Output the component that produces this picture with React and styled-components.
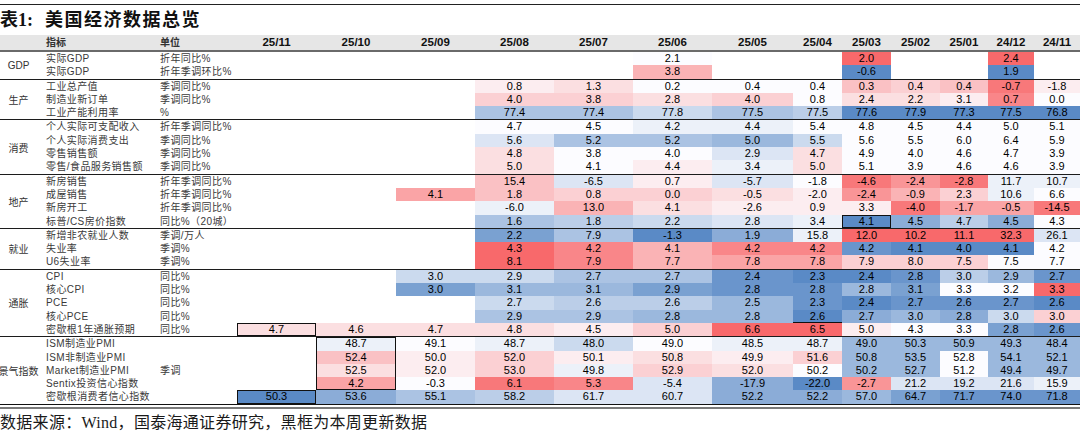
import React from 'react';
import styled, { createGlobalStyle } from 'styled-components';

const GlobalStyle = createGlobalStyle`
  html, body { margin: 0; padding: 0; background: #fff; }
  body { font-family: "Liberation Sans", "Noto Sans CJK SC", sans-serif; color: #000; }
`;

const COLS = '44px 114px 79px 79px 80px 79px 79px 79px 79px 81px 49px 49px 49px 48px 46px 46px';
const ROW_H = 13.3;

const RED = [248, 105, 107];
const BLUE = [90, 138, 198];
const WHITE = [252, 252, 255];

// tone like "r7" / "b10" / "w" -> excel style 3 colour scale
const toneColor = (tone) => {
  if (!tone) return 'transparent';
  if (tone === 'w') return 'rgb(252,252,255)';
  const target = tone[0] === 'r' ? RED : BLUE;
  const k = parseInt(tone.slice(1), 10) / 10;
  const c = WHITE.map((w, i) => Math.round(w + (target[i] - w) * k));
  return `rgb(${c.join(',')})`;
};

const boxShadow = (sides) => {
  if (!sides) return 'none';
  const map = { l: 'inset 1px 0 0 #111', r: 'inset -1px 0 0 #111', t: 'inset 0 1px 0 #111', b: 'inset 0 -1px 0 #111' };
  return sides.split('').map((s) => map[s]).join(', ');
};

const Page = styled.div`
  width: 1080px;
  height: 435px;
  overflow: hidden;
  padding-top: 4px;
  box-sizing: border-box;
`;

const TopRule = styled.div`
  border-top: 1.5px solid #222;
`;

const Title = styled.h1`
  margin: 0;
  height: 30px;
  line-height: 30px;
  font-family: "Liberation Serif", "Noto Sans CJK SC", serif;
  font-size: 18px;
  font-weight: bold;
  color: #111;
  white-space: nowrap;
`;

const TitleName = styled.span`
  margin-left: 12px;
  letter-spacing: 1.5px;
`;

const HeaderRow = styled.div`
  display: grid;
  grid-template-columns: ${COLS};
  height: 15px;
  background: #e6e6e6;
  border-bottom: 2px solid #6a6a6a;
`;

const HeadLabel = styled.div`
  padding-left: 2px;
  font-size: 10px;
  font-weight: bold;
  line-height: 15px;
  color: #333;
`;

const HeadDate = styled.div`
  text-align: center;
  font-size: 11.5px;
  font-weight: bold;
  line-height: 15px;
  color: #111;
`;

const Group = styled.div`
  display: grid;
  grid-template-columns: ${COLS};
  grid-auto-rows: ${ROW_H}px;
  border-top: ${(p) => (p.$first ? 'none' : '1px solid #1c1c1c')};
`;

const GroupLabel = styled.div`
  grid-column: 1;
  grid-row: 1 / span ${(p) => p.$rows};
  display: flex;
  align-items: center;
  justify-content: center;
  padding-right: 7px;
  font-size: 10px;
  color: #333;
  white-space: nowrap;
  overflow: visible;
`;

const Indicator = styled.div`
  padding-left: 2px;
  font-size: 10px;
  line-height: ${ROW_H}px;
  color: #3a3a3a;
  letter-spacing: 0.4px;
  white-space: nowrap;
`;

const Unit = styled(Indicator)`
  ${(p) => p.$span && `
    grid-column: 3;
    grid-row: 1 / span ${p.$span};
    display: flex;
    align-items: center;
  `}
`;

const Cell = styled.div`
  text-align: center;
  font-size: 11px;
  line-height: ${ROW_H}px;
  color: #000;
  background: ${(p) => toneColor(p.$tone)};
  box-shadow: ${(p) => boxShadow(p.$box)};
  white-space: nowrap;
`;

const BottomRule = styled.div`
  height: 2px;
  border-top: 1.5px solid #111;
  border-bottom: 2px solid #7a7a7a;
`;

const Source = styled.div`
  margin-top: 4px;
  font-family: "Liberation Serif", "Noto Sans CJK SC", serif;
  font-size: 16px;
  line-height: 20px;
  letter-spacing: 0.3px;
  color: #1a1a1a;
  white-space: nowrap;
`;

const DATES = ['25/11', '25/10', '25/09', '25/08', '25/07', '25/06', '25/05', '25/04', '25/03', '25/02', '25/01', '24/12', '24/11'];

const GROUPS = [
  {
    name: 'GDP',
    rows: [
      ['实际GDP', '折年同比%', ['', '', '', '', '', '2.1 w', '', '', '2.0 r10', '', '', '2.4 r10', '']],
      ['实际GDP', '折年季调环比%', ['', '', '', '', '', '3.8 r5', '', '', '-0.6 b10', '', '', '1.9 b10', '']],
    ],
  },
  {
    name: '生产',
    rows: [
      ['工业总产值', '季调同比%', ['', '', '', '0.8 r1', '1.3 r2', '0.2 w', '0.4 w', '0.4 w', '0.3 r4', '0.4 r3', '0.4 r4', '-0.7 r9', '-1.8 r1']],
      ['制造业新订单', '季调同比%', ['', '', '', '4.0 r3', '3.8 r3', '2.8 r2', '4.0 r3', '0.8 w', '2.4 r2', '2.2 r2', '3.1 r1', '0.7 r8', '0.0 w']],
      ['工业产能利用率', '%', ['', '', '', '77.4 b5', '77.4 b5', '77.8 b3', '77.5 b5', '77.5 b4', '77.6 b10', '77.9 b10', '77.3 b10', '77.5 b10', '76.8 b10']],
    ],
  },
  {
    name: '消费',
    rows: [
      ['个人实际可支配收入', '折年季调同比%', ['', '', '', '4.7 w', '4.5 w', '4.2 b1', '4.4 b1', '5.4 w', '4.8 w', '4.5 w', '4.4 w', '5.0 w', '5.1 w']],
      ['个人实际消费支出', '季调同比%', ['', '', '', '5.6 b2', '5.2 b5', '5.2 b5', '5.0 b6', '5.5 b3', '5.6 w', '5.5 w', '6.0 w', '6.4 w', '5.9 w']],
      ['零售销售额', '季调同比%', ['', '', '', '4.8 r2', '3.8 w', '4.0 w', '2.9 b2', '4.7 r2', '4.9 w', '4.0 w', '4.6 w', '4.7 w', '3.9 w']],
      ['零售/食品服务销售额', '季调同比%', ['', '', '', '5.0 r2', '4.1 w', '4.4 r1', '3.4 b1', '5.0 r2', '5.1 w', '3.9 w', '4.6 w', '4.6 w', '3.9 w']],
    ],
  },
  {
    name: '地产',
    rows: [
      ['新房销售', '折年季调同比%', ['', '', '', '15.4 r4', '-6.5 b2', '0.7 r1', '-5.7 b2', '-1.8 w', '-4.6 r9', '-2.4 r7', '-2.8 r9', '11.7 b1', '10.7 b1']],
      ['成屋销售', '折年季调同比%', ['', '', '4.1 r6', '1.8 r4', '0.8 r3', '0.0 r3', '-0.5 r2', '-2.0 r1', '-2.4 r7', '-0.9 r5', '2.3 r3', '10.6 b1', '6.6 w']],
      ['新房开工', '折年季调同比%', ['', '', '', '-6.0 b1', '13.0 r5', '4.1 r2', '-2.6 r1', '0.9 r1', '3.3 r1', '-4.0 r9', '-1.7 r6', '-0.5 r6', '-14.5 r9']],
      ['标普/CS房价指数', '同比%（20城）', ['', '', '', '1.6 b5', '1.8 b4', '2.2 b3', '2.8 b2', '3.4 b1', '4.1 b10 tlrb', '4.5 b7', '4.7 b4', '4.5 b7', '4.3 w']],
    ],
  },
  {
    name: '就业',
    rows: [
      ['新增非农就业人数', '季调/万人', ['', '', '', '2.2 b8', '7.9 b5', '-1.3 b10', '1.9 b7', '15.8 b1', '12.0 r10', '10.2 r10', '11.1 r10', '32.3 r10', '26.1 b2']],
      ['失业率', '季调%', ['', '', '', '4.3 r10', '4.2 r8', '4.1 r5', '4.2 r8', '4.2 r8', '4.2 b9', '4.1 b10', '4.0 b10', '4.1 b10', '4.2 w']],
      ['U6失业率', '季调%', ['', '', '', '8.1 r10', '7.9 r8', '7.7 r5', '7.8 r6', '7.8 r6', '7.9 r3', '8.0 r3', '7.5 r3', '7.5 w', '7.7 w']],
    ],
  },
  {
    name: '通胀',
    rows: [
      ['CPI', '同比%', ['', '', '3.0 b3', '2.9 b3', '2.7 b5', '2.7 b5', '2.4 b9', '2.3 b10', '2.4 b10', '2.8 b9', '3.0 b4', '2.9 b6', '2.7 b9']],
      ['核心CPI', '同比%', ['', '', '3.0 b8', '3.1 b6', '3.1 b6', '2.9 b8', '2.8 b9', '2.8 b9', '2.8 b6', '3.1 b8', '3.3 w', '3.2 w', '3.3 r10']],
      ['PCE', '同比%', ['', '', '', '2.7 b3', '2.6 b4', '2.6 b4', '2.5 b6', '2.3 b9', '2.4 b10', '2.7 b9', '2.6 b9', '2.7 b9', '2.6 b10']],
      ['核心PCE', '同比%', ['', '', '', '2.9 b5', '2.9 b5', '2.8 b6', '2.8 b6', '2.6 b10 b', '2.7 b7', '3.0 b6', '2.8 b7', '3.0 b3', '3.0 r3']],
      ['密歇根1年通胀预期', '同比%', ['4.7 r2 tlrb', '4.6 r2', '4.7 r2', '4.8 r2', '4.5 r1', '5.0 r3', '6.6 r10', '6.5 r10', '5.0 r1', '4.3 w', '3.3 w', '2.8 b8', '2.6 b9']],
    ],
  },
  {
    name: '景气指数',
    unit: '季调',
    rows: [
      ['ISM制造业PMI', null, ['', '48.7 b1 tlr', '49.1 w', '48.7 b1', '48.0 b3', '49.0 w', '48.5 b1', '48.7 b1', '49.0 b6', '50.3 b6', '50.9 b6', '49.3 b6', '48.4 b6']],
      ['ISM非制造业PMI', null, ['', '52.4 r4 lr', '50.0 r1', '52.0 r3', '50.1 r1', '50.8 r2', '49.9 r1', '51.6 r3', '50.8 b6', '53.5 b6', '52.8 w', '54.1 b6', '52.1 b6']],
      ['Market制造业PMI', null, ['', '52.5 r2 lr', '52.0 r1', '53.0 r3', '49.8 b1', '52.9 r3', '52.0 r2', '50.2 w', '50.2 b6', '52.7 b6', '51.2 w', '49.4 b6', '49.7 b6']],
      ['Sentix投资信心指数', null, ['', '4.2 r6 lrb', '-0.3 w', '6.1 r9', '5.3 r8', '-5.4 b2', '-17.9 b7', '-22.0 b10', '-2.7 r7', '21.2 b2', '19.2 b2', '21.6 b2', '15.9 b1']],
      ['密歇根消费者信心指数', null, ['50.3 b10 tlrb', '53.6 b7', '55.1 b5', '58.2 b4', '61.7 b2', '60.7 b2', '52.2 b7', '52.2 b7', '57.0 b6', '64.7 b8', '71.7 b9', '74.0 b9', '71.8 b9']],
    ],
  },
];

const DataCell = ({ spec }) => {
  const [value, tone, box] = spec.split(' ');
  return (
    <Cell $tone={value ? tone : ''} $box={box}>
      {value}
    </Cell>
  );
};

const App = () => (
  <Page>
    <GlobalStyle />
    <TopRule />
    <Title>
      表1:<TitleName>美国经济数据总览</TitleName>
    </Title>
    <HeaderRow>
      <div />
      <HeadLabel>指标</HeadLabel>
      <HeadLabel>单位</HeadLabel>
      {DATES.map((d) => (
        <HeadDate key={d}>{d}</HeadDate>
      ))}
    </HeaderRow>
    {GROUPS.map((g, gi) => (
      <Group key={g.name} $first={gi === 0}>
        <GroupLabel $rows={g.rows.length}>{g.name}</GroupLabel>
        {g.unit && <Unit $span={g.rows.length}>{g.unit}</Unit>}
        {g.rows.map(([name, unit, cells], ri) => (
          <React.Fragment key={ri}>
            <Indicator>{name}</Indicator>
            {unit !== null && <Unit>{unit}</Unit>}
            {cells.map((c, ci) => (
              <DataCell key={ci} spec={c} />
            ))}
          </React.Fragment>
        ))}
      </Group>
    ))}
    <BottomRule />
    <Source>数据来源：Wind，国泰海通证券研究，黑框为本周更新数据</Source>
  </Page>
);

export default App;
